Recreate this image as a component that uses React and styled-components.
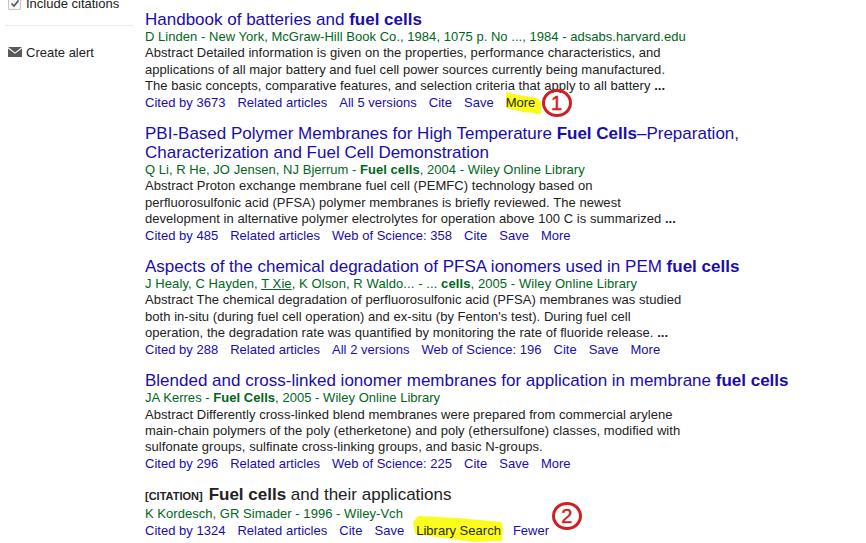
import React from "react";
import styled, { createGlobalStyle } from "styled-components";

const Global = createGlobalStyle`
  html, body { margin: 0; padding: 0; background: #fff; height: 543px; overflow: hidden; }
  body { font-family: "Liberation Sans", Arial, sans-serif; color: #222; }
`;
const Page = styled.div`display: flex; width: 866px; height: 543px; overflow: hidden;`;
const Sidebar = styled.aside`width: 145px; flex: none;`;
const CheckRow = styled.div`
  display: flex; align-items: center; gap: 5px; margin: -7px 0 0 8px; height: 20px;
  font-size: 13px; color: #222; width: 125px;
`;
const CheckBox = styled.span`
  width: 11px; height: 11px; border: 1px solid #c6c6c6; border-radius: 1px; background: #f6f6f6; flex: none;
  display: flex; align-items: center; justify-content: center;
`;
const Divider = styled.div`height: 1px; width: 128px; margin: 12px 0 0 5px; background: #ebebeb;`;
const AlertRow = styled.div`display: flex; align-items: center; gap: 4px; margin: 18px 0 0 8px; font-size: 13px; color: #222; height: 16px;`;
const Results = styled.main`flex: 1; padding-top: 10px; min-width: 0;`;
const Item = styled.article`margin-bottom: 13px; width: 690px;`;
const Title = styled.h3`
  margin: 0; font-size: 17px; line-height: 19px; font-weight: 400; color: #1a0dab;
  b { font-weight: 700; }
`;
const PlainTitle = styled(Title)`color: #222;`;
const Tag = styled.span`font-size: 11px; font-weight: 700; margin-right: 6px; color: #222;`;
const Meta = styled.div`
  font-size: 13px; line-height: 16.4px; color: #006621; white-space: nowrap; letter-spacing: ${p => p.$spacing || 0.035}px;
  b { font-weight: 700; }
  u { text-decoration: underline; }
`;
const Abstract = styled.div`
  font-size: 13px; line-height: 16.4px; color: #222; white-space: nowrap; letter-spacing: 0.045px;
  b { font-weight: 700; }
`;
const Links = styled.div`display: flex; gap: 12px; font-size: 13px; line-height: 16.4px; color: #1a0dab; white-space: nowrap; letter-spacing: 0.015px;`;
const LinkItem = styled.span`position: relative; isolation: isolate;`;
const HighlightText = styled.span`position: relative; color: #2a2a10;`;
const Marker = styled.svg`position: absolute; z-index: -1; overflow: visible;`;
const Badge = styled.span`
  position: absolute; width: 30px; height: 28px; box-sizing: border-box; border: 3px solid #cf1f25; border-radius: 50%;
  display: flex; align-items: center; justify-content: center; font-size: 20px; font-weight: 400; color: #cf1f25; line-height: 1;
  -webkit-text-stroke: 0.5px #cf1f25;
`;

const L = ({ children }) => <LinkItem>{children}</LinkItem>;

export default function App() {
  return (
    <Page>
      <Global />
      <Sidebar>
        <CheckRow>
          <CheckBox>
            <svg width="10" height="9" viewBox="0 0 10 9"><path d="M1.5 4.5 L4 7 L8.5 1.5" fill="none" stroke="#555" strokeWidth="1.7" /></svg>
          </CheckBox>
          Include citations
        </CheckRow>
        <Divider />
        <AlertRow>
          <svg width="14" height="10" viewBox="0 0 14 10"><path d="M0 0 H14 L7 5.5 Z" fill="#5a5a5a" /><path d="M0 1.4 L7 6.8 L14 1.4 V10 H0 Z" fill="#5a5a5a" /></svg>
          Create alert
        </AlertRow>
      </Sidebar>
      <Results>
        <Item>
          <Title>Handbook of batteries and <b>fuel cells</b></Title>
          <Meta>D Linden - New York, McGraw-Hill Book Co., 1984, 1075 p. No ..., 1984 - adsabs.harvard.edu</Meta>
          <Abstract>Abstract Detailed information is given on the properties, performance characteristics, and<br />applications of all major battery and fuel cell power sources currently being manufactured.<br />The basic concepts, comparative features, and selection criteria that apply to all battery <b>...</b></Abstract>
          <Links>
            <L>Cited by 3673</L><L>Related articles</L><L>All 5 versions</L><L>Cite</L><L>Save</L>
            <LinkItem>
              <Marker style={{ left: 0, top: -3 }} width="36" height="25" viewBox="0 0 36 25"><path d="M0 0 L12 3 L31 6 L35 10 L35 22 L18 20 L0 16 Z" fill="#fbfb1e" /></Marker>
              <HighlightText>More</HighlightText>
              <Badge style={{ left: 36, top: -6 }}>1</Badge>
            </LinkItem>
          </Links>
        </Item>
        <Item>
          <Title>PBI-Based Polymer Membranes for High Temperature <b>Fuel Cells</b>–Preparation,<br />Characterization and Fuel Cell Demonstration</Title>
          <Meta>Q Li, R He, JO Jensen, NJ Bjerrum - <b>Fuel cells</b>, 2004 - Wiley Online Library</Meta>
          <Abstract>Abstract Proton exchange membrane fuel cell (PEMFC) technology based on<br />perfluorosulfonic acid (PFSA) polymer membranes is briefly reviewed. The newest<br />development in alternative polymer electrolytes for operation above 100 C is summarized <b>...</b></Abstract>
          <Links>
            <L>Cited by 485</L><L>Related articles</L><L>Web of Science: 358</L><L>Cite</L><L>Save</L><L>More</L>
          </Links>
        </Item>
        <Item>
          <Title>Aspects of the chemical degradation of PFSA ionomers used in PEM <b>fuel cells</b></Title>
          <Meta $spacing={0.09}>J Healy, C Hayden, <u>T Xie</u>, K Olson, R Waldo... - ... <b>cells</b>, 2005 - Wiley Online Library</Meta>
          <Abstract>Abstract The chemical degradation of perfluorosulfonic acid (PFSA) membranes was studied<br />both in-situ (during fuel cell operation) and ex-situ (by Fenton's test). During fuel cell<br />operation, the degradation rate was quantified by monitoring the rate of fluoride release. <b>...</b></Abstract>
          <Links>
            <L>Cited by 288</L><L>Related articles</L><L>All 2 versions</L><L>Web of Science: 196</L><L>Cite</L><L>Save</L><L>More</L>
          </Links>
        </Item>
        <Item>
          <Title>Blended and cross-linked ionomer membranes for application in membrane <b>fuel cells</b></Title>
          <Meta>JA Kerres - <b>Fuel Cells</b>, 2005 - Wiley Online Library</Meta>
          <Abstract>Abstract Differently cross-linked blend membranes were prepared from commercial arylene<br />main-chain polymers of the poly (etherketone) and poly (ethersulfone) classes, modified with<br />sulfonate groups, sulfinate cross-linking groups, and basic N-groups.</Abstract>
          <Links>
            <L>Cited by 296</L><L>Related articles</L><L>Web of Science: 225</L><L>Cite</L><L>Save</L><L>More</L>
          </Links>
        </Item>
        <Item>
          <PlainTitle><Tag>[CITATION]</Tag><b>Fuel cells</b> and their applications</PlainTitle>
          <Meta>K Kordesch, GR Simader - 1996 - Wiley-Vch</Meta>
          <Links>
            <L>Cited by 1324</L><L>Related articles</L><L>Cite</L><L>Save</L>
            <LinkItem>
              <Marker style={{ left: -3, top: -7 }} width="91" height="26" viewBox="0 0 91 26"><path d="M0 6 L5 0 L45 2 L88 6 L90 12 L89 25 L60 26 L30 22 L2 18 Z" fill="#fbfb1e" /></Marker>
              <HighlightText>Library Search</HighlightText>
            </LinkItem>
            <LinkItem>
              Fewer
              <Badge style={{ left: 39, top: -21 }}>2</Badge>
            </LinkItem>
          </Links>
        </Item>
      </Results>
    </Page>
  );
}
